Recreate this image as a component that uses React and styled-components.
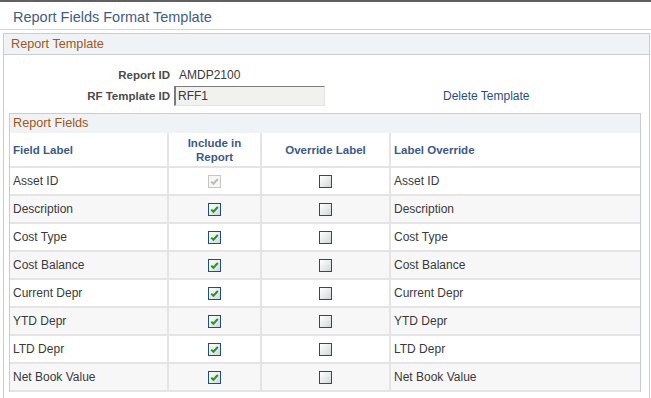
import React from 'react';
import styled, { createGlobalStyle } from 'styled-components';

const GlobalStyle = createGlobalStyle`
  html, body {
    margin: 0;
    padding: 0;
    background: #fff;
  }
  body {
    font-family: "Liberation Sans", Arial, sans-serif;
    overflow: hidden;
  }
`;

const Page = styled.div`
  width: 651px;
  height: 398px;
  border-top: 2px solid #616161;
  box-sizing: border-box;
  overflow: hidden;
`;

const TitleBar = styled.div`
  height: 28px;
  padding: 7px 0 0 13px;
  box-sizing: border-box;
  border-bottom: 1px solid #d3d7dc;
`;

const Title = styled.h1`
  margin: 0;
  font-size: 14.5px;
  line-height: 17px;
  font-weight: normal;
  color: #3e5d8a;
`;

const GroupBox = styled.section`
  margin: 3px 1px 0 3px;
  border: 1px solid #c9cdd3;
  border-bottom: none;
  height: 400px;
`;

const GroupHeader = styled.div`
  height: ${(p) => p.$h}px;
  line-height: ${(p) => p.$h}px;
  padding-left: ${(p) => p.$pad}px;
  background: #eff3f5;
  border-bottom: ${(p) => (p.$line ? '1px solid #c9cdd3' : 'none')};
  color: #a1561c;
  font-size: 12.7px;
`;

const Form = styled.div`
  padding-top: 10px;
  display: flex;
  flex-direction: column;
  gap: 1px;
`;

const FormRow = styled.div`
  display: flex;
  align-items: center;
  height: 20px;
`;

const Label = styled.div`
  width: 166px;
  text-align: right;
  font-size: 11.5px;
  font-weight: bold;
  color: #4b4b4b;
  margin-right: 4px;
`;

const Value = styled.div`
  padding-left: 5px;
  font-size: 12px;
  color: #3a3a3a;
`;

const Input = styled.div`
  width: 151px;
  height: 20px;
  box-sizing: border-box;
  border-top: 1px solid #7c7c7c;
  border-left: 2px solid #7c7c7c;
  border-right: 1px solid #e6e6df;
  border-bottom: 1px solid #e6e6df;
  background: #f1f1ef;
  padding-left: 2px;
  font-size: 12px;
  line-height: 18px;
  color: #3a3a3a;
`;

const Link = styled.a`
  margin-left: 118px;
  font-size: 12px;
  color: #1d4f91;
  text-decoration: none;
  cursor: pointer;
`;

const GridBox = styled.div`
  margin: 7px 8px 0 5px;
  border: 1px solid #c9cdd3;
  border-bottom: none;
`;

const Grid = styled.div`
  display: grid;
  grid-template-columns: 159px 93px 129px 1fr;
`;

const Cell = styled.div`
  height: ${(p) => (p.$head ? 35 : 28)}px;
  box-sizing: border-box;
  border-right: ${(p) => (p.$last ? 'none' : '2px solid #e4e4e4')};
  border-bottom: 2px solid #e4e4e4;
  background: ${(p) => (p.$alt ? '#f7f7f7' : '#fff')};
  padding: 0 3px;
  display: flex;
  align-items: center;
  justify-content: ${(p) => (p.$center ? 'center' : 'flex-start')};
  text-align: ${(p) => (p.$center ? 'center' : 'left')};
  font-size: ${(p) => (p.$head ? '11.5px' : '12px')};
  font-weight: ${(p) => (p.$head ? 'bold' : 'normal')};
  line-height: 14px;
  color: ${(p) => (p.$head ? '#3a5a8c' : '#3a3a3a')};
`;

const Box = styled.span`
  width: 13px;
  height: 13px;
  box-sizing: border-box;
  border: 1px solid ${(p) => (p.$disabled ? '#c7c7bf' : '#1b4f7f')};
  background: ${(p) =>
    p.$disabled ? '#f6f6f4' : 'linear-gradient(135deg, #ffffff 0%, #eceeee 45%, #d3d7d7 100%)'};
  display: inline-flex;
  align-items: center;
  justify-content: center;
  margin-top: 1px;
`;

const CheckBox = ({ checked, disabled }) => (
  <Box $disabled={disabled}>
    {checked && (
      <svg width="11" height="11" viewBox="0 0 11 11">
        <path
          d="M2.2 5.6 L4.4 7.8 L8.8 3"
          fill="none"
          stroke={disabled ? '#bdbdb5' : '#1f9a24'}
          strokeWidth="2"
        />
      </svg>
    )}
  </Box>
);

const fields = [
  'Asset ID',
  'Description',
  'Cost Type',
  'Cost Balance',
  'Current Depr',
  'YTD Depr',
  'LTD Depr',
  'Net Book Value',
];

const App = () => {
  return (
    <Page>
      <GlobalStyle />
      <TitleBar>
        <Title>Report Fields Format Template</Title>
      </TitleBar>
      <GroupBox>
        <GroupHeader $h={20} $pad={7} $line>
          Report Template
        </GroupHeader>
        <Form>
          <FormRow>
            <Label>Report ID</Label>
            <Value>AMDP2100</Value>
          </FormRow>
          <FormRow>
            <Label>RF Template ID</Label>
            <Input>RFF1</Input>
            <Link>Delete Template</Link>
          </FormRow>
        </Form>
        <GridBox>
          <GroupHeader $h={19} $pad={3}>
            Report Fields
          </GroupHeader>
          <Grid>
            <Cell $head>Field Label</Cell>
            <Cell $head $center>
              Include in
              <br />
              Report
            </Cell>
            <Cell $head $center>Override Label</Cell>
            <Cell $head $last>Label Override</Cell>
            {fields.map((f, i) => (
              <React.Fragment key={f}>
                <Cell $alt={i % 2 === 1}>{f}</Cell>
                <Cell $alt={i % 2 === 1} $center>
                  <CheckBox checked disabled={i === 0} />
                </Cell>
                <Cell $alt={i % 2 === 1} $center>
                  <CheckBox />
                </Cell>
                <Cell $alt={i % 2 === 1} $last>
                  {f}
                </Cell>
              </React.Fragment>
            ))}
          </Grid>
        </GridBox>
      </GroupBox>
    </Page>
  );
};

export default App;
